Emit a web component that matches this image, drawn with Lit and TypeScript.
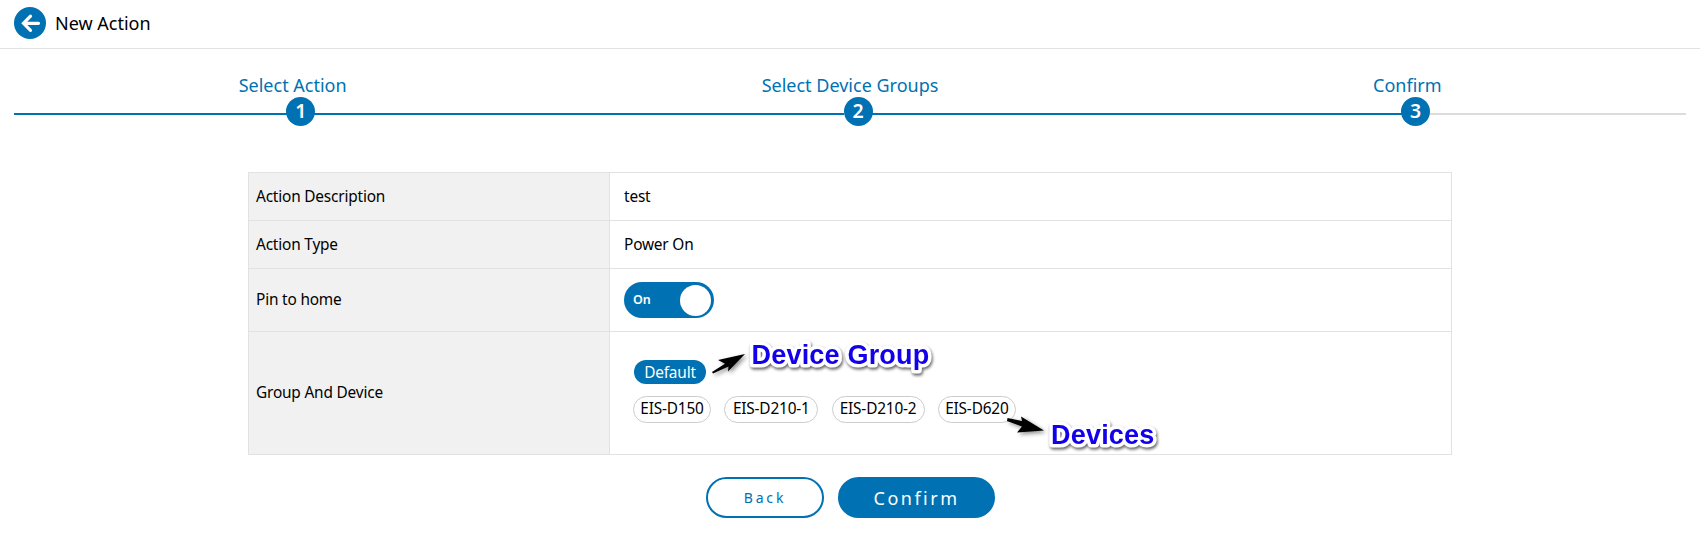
import { LitElement, html, css, svg } from "lit";
import { customElement, property } from "lit/decorators.js";

@customElement("step-bar")
class StepBar extends LitElement {
  @property({ type: Array }) steps: string[] = [];
  @property({ type: Number }) current = 3;

  static styles = css`
    :host { display: block; padding: 24px 14px 0; }
    .steps { display: grid; grid-template-columns: repeat(3, 1fr); color: #0072b3; }
    .step { display: flex; flex-direction: column; align-items: center; }
    .label { font-size: 18px; line-height: 24px; white-space: nowrap; }
    .rail { display: grid; grid-template-columns: 1fr 29px 1fr; align-items: center; width: 100%; height: 29px; }
    .line { height: 2px; margin-top: 5px; background: #0072b3; }
    .left { margin-right: -9px; }
    .right { margin-left: 6px; }
    .rest { background: #dcdcdc; }
    .dot {
      width: 29px; height: 29px; border-radius: 50%; background: #0072b3; color: #fff;
      font-size: 19.5px; font-weight: 600; line-height: 28px; text-align: center;
      margin-left: 8.2px; z-index: 1;
    }
  `;

  render() {
    return html`<div class="steps">
      ${this.steps.map(
        (s, i) => html`<div class="step">
          <div class="label">${s}</div>
          <div class="rail">
            <div class="line left"></div>
            <div class="dot">${i + 1}</div>
            <div class="line right ${i + 1 >= this.current ? "rest" : ""}"></div>
          </div>
        </div>`
      )}
    </div>`;
  }
}

@customElement("app-root")
class AppRoot extends LitElement {
  private devices = [
    { name: "EIS-D150", width: 78 },
    { name: "EIS-D210-1", width: 94 },
    { name: "EIS-D210-2", width: 93 },
    { name: "EIS-D620", width: 78 },
  ];

  static styles = css`
    :host {
      display: block; position: relative; height: 555px; overflow: hidden; background: #fff;
      color: #000; font-family: "Noto Sans", "Open Sans", sans-serif; font-size: 15.4px; letter-spacing: -0.18px;
    }
    * { box-sizing: border-box; }
    step-bar { letter-spacing: 0; }
    .header {
      display: flex; align-items: center; gap: 9px; height: 49px; padding: 0 14px 2px;
      border-bottom: 1px solid #e2e2e2;
    }
    .back-icon { display: block; width: 32px; height: 32px; }
    .title { font-size: 18px; line-height: 24px; letter-spacing: 0; }
    .table {
      display: grid; grid-template-columns: 361px 842px; grid-template-rows: 48px 48px 63px 123px;
      width: 1204px; margin: 46px 0 0 248px; border: 1px solid #e2e2e2; border-width: 1px 0 0 1px;
    }
    .name, .value { display: flex; align-items: center; border: 1px solid #e2e2e2; border-width: 0 1px 1px 0; line-height: 20px; }
    .name { background: #f1f1f1; padding-left: 7px; }
    .value { padding-left: 14px; }
    .groups { flex-direction: column; align-items: flex-start; padding: 28px 0 0 23px; }
    .toggle {
      display: flex; align-items: center; justify-content: space-between; width: 90px; height: 36px;
      padding: 0 3px 0 9px; border-radius: 18px; background: #0072b3; color: #fff;
      font-size: 12.5px; font-weight: 600; letter-spacing: 0;
    }
    .knob { width: 31px; height: 31px; border-radius: 50%; background: #fff; }
    .group {
      width: 72px; height: 24px; margin-left: 1px; border-radius: 12px; background: #0072b3; color: #fff;
      text-align: center; line-height: 25px;
    }
    .devices { display: flex; gap: 13.3px; margin-top: 12px; }
    .device { height: 27px; border: 1px solid #ccc; border-radius: 14px; text-align: center; line-height: 23px; white-space: nowrap; }
    .buttons { display: flex; gap: 14px; margin: 22px 0 0 706px; }
    .button { height: 41px; border: 2px solid #0072b3; border-radius: 20.5px; text-align: center; font-family: inherit; padding: 0; }
    .back { width: 118px; background: #fff; color: #0072b3; font-size: 14px; font-weight: 400; letter-spacing: 2.8px; }
    .confirm { width: 157px; background: #0072b3; color: #fff; font-size: 18px; font-weight: 400; letter-spacing: 2.5px; }
    .notes { position: absolute; left: 700px; top: 330px; width: 480px; height: 124px; overflow: visible; pointer-events: none; }
    .note {
      font: bold 27px "Liberation Sans", Arial, sans-serif; letter-spacing: 0.2px; fill: #1200ea; stroke: #fff; stroke-width: 7px;
      stroke-linejoin: round; paint-order: stroke; filter: drop-shadow(1.5px 2px 1.5px rgba(0, 0, 0, 0.6));
    }
    .arrow { fill: #000; filter: drop-shadow(2px 2px 2px rgba(0, 0, 0, 0.45)); }
  `;

  render() {
    return html`
      <div class="header">
        <svg class="back-icon" viewBox="0 0 32 32">
          <circle cx="16" cy="16" r="16" fill="#0072b3" />
          <path d="M16.5 9.2L9.5 16.3L16.5 23.4M9.5 16.3H24.5" fill="none" stroke="#fff" stroke-width="3.2" stroke-linecap="round" />
        </svg>
        <div class="title">New Action</div>
      </div>
      <step-bar .steps=${["Select Action", "Select Device Groups", "Confirm"]}></step-bar>
      <div class="table">
        <div class="name">Action Description</div>
        <div class="value">test</div>
        <div class="name">Action Type</div>
        <div class="value">Power On</div>
        <div class="name">Pin to home</div>
        <div class="value"><div class="toggle"><span>On</span><div class="knob"></div></div></div>
        <div class="name">Group And Device</div>
        <div class="value groups">
          <div class="group">Default</div>
          <div class="devices">
            ${this.devices.map((d) => html`<div class="device" style="width:${d.width}px">${d.name}</div>`)}
          </div>
        </div>
      </div>
      <div class="buttons">
        <button class="button back">Back</button>
        <button class="button confirm">Confirm</button>
      </div>
      <svg class="notes" viewBox="0 0 480 124">
        ${svg`
          <path class="arrow" d="M12 42L25 33.8L18 30L45 24L28 41.5L28.5 36.5L13 43.5Z" />
          <path class="arrow" d="M307.5 88L322 91L321 86.5L344 100.5L317 102.5L322 96.5L307 91Z" />
          <text class="note" x="51.5" y="33.5">Device Group</text>
          <text class="note" x="351" y="113.5">Devices</text>
        `}
      </svg>
    `;
  }
}
